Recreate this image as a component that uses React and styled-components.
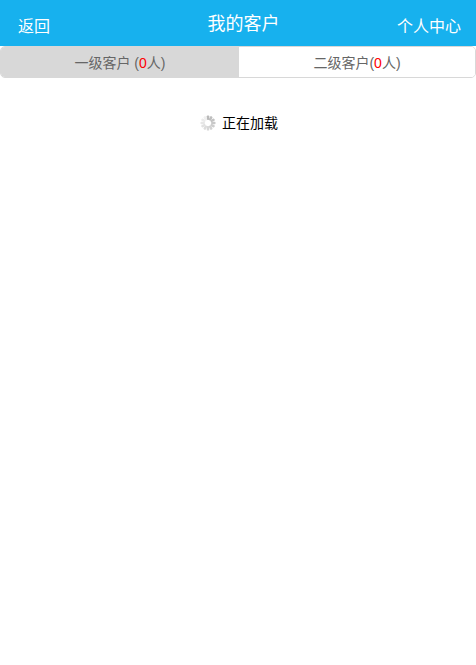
import styled, { createGlobalStyle } from "styled-components";

const fontStack = `"Liberation Sans", "Noto Sans CJK SC", sans-serif`;

const GlobalStyle = createGlobalStyle`
  html, body {
    margin: 0;
    padding: 0;
    background: #fff;
    font-family: ${fontStack};
  }
`;

const spokes = [0, 30, 60, 90, 120, 150, 180, 210, 240, 270, 300, 330];

export default function App() {
  return (
    <Page>
      <GlobalStyle />
      <Header>
        <BackLink>返回</BackLink>
        <Title>我的客户</Title>
        <ProfileLink>个人中心</ProfileLink>
      </Header>
      <Tabs>
        <Tab $active>
          一级客户 (<Count>0</Count>人)
        </Tab>
        <Tab>
          二级客户(<Count>0</Count>人)
        </Tab>
      </Tabs>
      <Loading>
        <svg width="16" height="16" viewBox="0 0 18 18">
          {spokes.map((angle, i) => {
            const shade = 185 + i * 5;
            return (
              <rect
                key={angle}
                x="7.6"
                y="0.5"
                width="2.8"
                height="5"
                rx="1"
                fill={`rgb(${shade},${shade},${shade})`}
                transform={`rotate(${angle} 9 9)`}
              />
            );
          })}
        </svg>
        <LoadingText>正在加载</LoadingText>
      </Loading>
    </Page>
  );
}

const Page = styled.div`
  width: 476px;
  min-height: 665px;
  background: #fff;
`;

const Header = styled.header`
  height: 46px;
  box-sizing: border-box;
  background: #17b1ee;
  color: #fff;
  display: grid;
  grid-template-columns: 1fr auto 1fr;
  padding: 0 15px 0 18px;
  font-size: 16px;
`;

const BackLink = styled.a`
  line-height: 53px;
`;

const Title = styled.h1`
  margin: 0 0 0 8px;
  font-size: 18px;
  font-weight: normal;
  line-height: 49px;
`;

const ProfileLink = styled.a`
  line-height: 53px;
  text-align: right;
`;

const Tabs = styled.div`
  display: flex;
  height: 32px;
  box-sizing: border-box;
  border: 1px solid #d8d8d8;
  border-radius: 5px;
  overflow: hidden;
`;

const Tab = styled.div`
  flex: ${(p) => (p.$active ? "0 0 238px" : "1")};
  background: ${(p) => (p.$active ? "#d8d8d8" : "#fff")};
  color: #666;
  font-size: 14px;
  line-height: 32px;
  text-align: center;
`;

const Count = styled.span`
  color: #f00;
`;

const Loading = styled.div`
  display: flex;
  justify-content: center;
  align-items: center;
  gap: 6px;
  margin-top: 35px;
  padding-left: 2px;
  height: 20px;
`;

const LoadingText = styled.span`
  font-size: 14px;
  color: #000;
  line-height: 20px;
`;
